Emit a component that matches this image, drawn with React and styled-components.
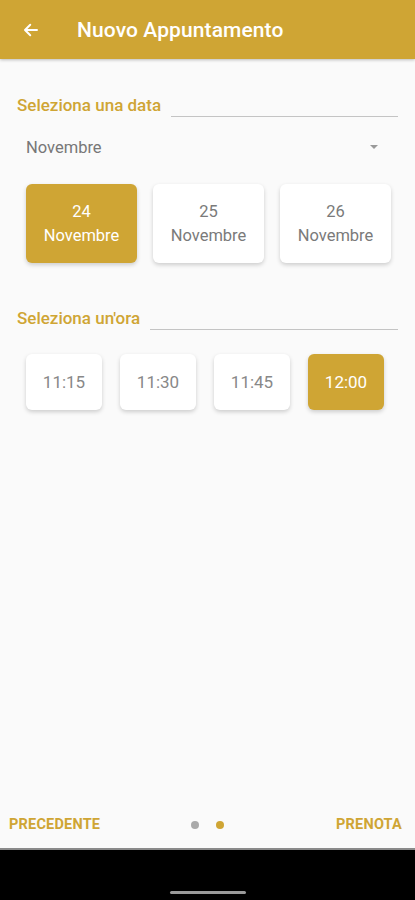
import React, { useState } from "react";
import styled, { createGlobalStyle } from "styled-components";

const gold = "#cfa534";

const GlobalStyle = createGlobalStyle`
  html, body {
    margin: 0;
    padding: 0;
    background: #fafafa;
    font-family: Roboto, "Noto Sans", sans-serif;
  }
  * { box-sizing: border-box; }
`;

const Screen = styled.div`
  width: 415px;
  height: 900px;
  display: flex;
  flex-direction: column;
  background: #fafafa;
`;

const Header = styled.div`
  height: 59px;
  background: ${gold};
  display: flex;
  align-items: center;
  padding-left: 20px;
  box-shadow: 0 1px 3px rgba(0, 0, 0, 0.25);
  position: relative;
  z-index: 1;
`;

const BackButton = styled.div`
  width: 22px;
  height: 22px;
  display: flex;
  align-items: center;
  justify-content: center;
  margin-right: 35px;
`;

const Title = styled.h1`
  margin: 0;
  color: #fff;
  font-size: 21px;
  font-weight: 500;
  letter-spacing: 0.1px;
`;

const Body = styled.div`
  flex: 1;
  padding: 34px 17px 0 17px;
  display: flex;
  flex-direction: column;
`;

const SectionHead = styled.div`
  display: flex;
  align-items: flex-end;
  gap: 10px;
  margin-top: ${(p) => p.$top || 0}px;
`;

const SectionLabel = styled.span`
  color: ${gold};
  font-size: 17px;
  font-weight: 500;
  white-space: nowrap;
  line-height: 24px;
`;

const Rule = styled.div`
  flex: 1;
  height: 1px;
  background: #c4c4c4;
`;

const Select = styled.div`
  display: flex;
  align-items: center;
  justify-content: space-between;
  margin: 20px 20px 0 9px;
  color: #777;
  font-size: 16.5px;
  height: 20px;
`;

const Caret = styled.div`
  width: 0;
  height: 0;
  border-left: 4.5px solid transparent;
  border-right: 4.5px solid transparent;
  border-top: 4.5px solid #999;
`;

const DateRow = styled.div`
  display: flex;
  gap: 16px;
  padding-left: 9px;
  margin-top: 27px;
`;

const DateCard = styled.div`
  width: 111px;
  height: 79px;
  border-radius: 6px;
  display: flex;
  flex-direction: column;
  align-items: center;
  justify-content: center;
  background: ${(p) => (p.$active ? gold : "#fff")};
  color: ${(p) => (p.$active ? "#fff" : "#7a7a7a")};
  box-shadow: 0 2px 4px rgba(0, 0, 0, 0.18);
  font-size: 16.5px;
  line-height: 24px;
  cursor: pointer;
`;

const TimeRow = styled.div`
  display: flex;
  gap: 18px;
  padding-left: 9px;
  margin-top: 24px;
`;

const TimeCard = styled.div`
  width: 76px;
  height: 56px;
  border-radius: 6px;
  display: flex;
  align-items: center;
  justify-content: center;
  background: ${(p) => (p.$active ? gold : "#fff")};
  color: ${(p) => (p.$active ? "#fff" : "#888")};
  box-shadow: 0 2px 4px rgba(0, 0, 0, 0.18);
  font-size: 17px;
  cursor: pointer;
`;

const Footer = styled.div`
  height: 49px;
  display: flex;
  align-items: center;
  justify-content: space-between;
  padding: 0 13px 0 9px;
  border-bottom: 2px solid #8a8a8a;
`;

const FooterButton = styled.span`
  color: ${gold};
  font-size: 14.5px;
  font-weight: 700;
  letter-spacing: 0.2px;
`;

const Dots = styled.div`
  display: flex;
  gap: 17px;
  margin-left: -22px;
`;

const Dot = styled.span`
  width: 8px;
  height: 8px;
  border-radius: 50%;
  background: ${(p) => (p.$active ? gold : "#a9a9a9")};
`;

const NavBar = styled.div`
  height: 50px;
  background: #000;
  display: flex;
  align-items: flex-end;
  justify-content: center;
  padding-bottom: 6px;
`;

const Handle = styled.div`
  width: 76px;
  height: 3px;
  border-radius: 2px;
  background: #9a9a9a;
`;

const dates = [24, 25, 26];
const times = ["11:15", "11:30", "11:45", "12:00"];

export default function App() {
  const [day, setDay] = useState(24);
  const [time, setTime] = useState("12:00");

  return (
    <Screen>
      <GlobalStyle />
      <Header>
        <BackButton>
          <svg width="18" height="18" viewBox="0 0 24 24" fill="none">
            <path
              d="M20 12H5M11 5l-7 7 7 7"
              stroke="#fff"
              strokeWidth="2.6"
              strokeLinecap="round"
              strokeLinejoin="round"
            />
          </svg>
        </BackButton>
        <Title>Nuovo Appuntamento</Title>
      </Header>
      <Body>
        <SectionHead>
          <SectionLabel>Seleziona una data</SectionLabel>
          <Rule />
        </SectionHead>
        <Select>
          <span>Novembre</span>
          <Caret />
        </Select>
        <DateRow>
          {dates.map((d) => (
            <DateCard key={d} $active={d === day} onClick={() => setDay(d)}>
              <span>{d}</span>
              <span>Novembre</span>
            </DateCard>
          ))}
        </DateRow>
        <SectionHead $top={43}>
          <SectionLabel>Seleziona un'ora</SectionLabel>
          <Rule />
        </SectionHead>
        <TimeRow>
          {times.map((t) => (
            <TimeCard key={t} $active={t === time} onClick={() => setTime(t)}>
              {t}
            </TimeCard>
          ))}
        </TimeRow>
      </Body>
      <Footer>
        <FooterButton>PRECEDENTE</FooterButton>
        <Dots>
          <Dot />
          <Dot $active />
        </Dots>
        <FooterButton>PRENOTA</FooterButton>
      </Footer>
      <NavBar>
        <Handle />
      </NavBar>
    </Screen>
  );
}
